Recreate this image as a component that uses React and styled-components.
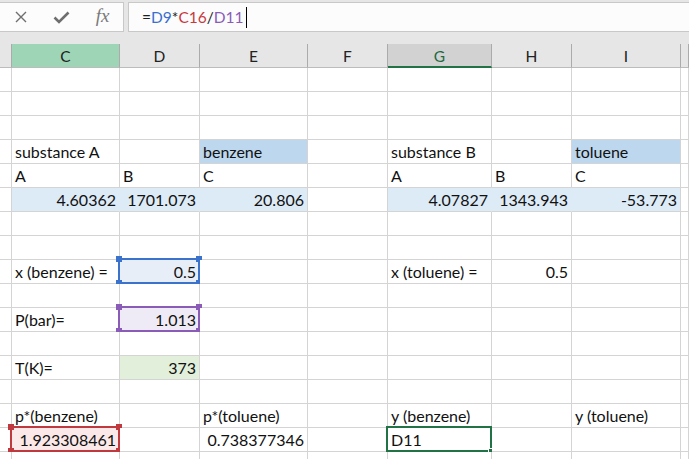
import React from "react";
import styled, { createGlobalStyle } from "styled-components";

const GlobalStyle = createGlobalStyle`
  html, body { margin: 0; padding: 0; background: #ffffff; overflow: hidden; }
  * { box-sizing: border-box; }
`;

const FONT = `"Lato", "Open Sans", "Liberation Sans", sans-serif`;

const Page = styled.div`
  width: 689px;
  height: 459px;
  display: flex;
  flex-direction: column;
  background: #ffffff;
  font-family: ${FONT};
  overflow: hidden;
`;

const FormulaBar = styled.div`
  height: 44px;
  flex: none;
  display: flex;
  align-items: flex-start;
  gap: 4px;
  padding-top: 2px;
  background: #e6e6e6;
`;

const IconBox = styled.div`
  width: 124px;
  height: 30px;
  display: flex;
  align-items: center;
  background: #fcfcfc;
  border-top: 1px solid #c8c8c8;
  border-bottom: 1px solid #c8c8c8;
  border-right: 1px solid #c8c8c8;
`;

const IconSlot = styled.div`
  width: 42px;
  height: 28px;
  display: flex;
  align-items: center;
  justify-content: center;
  color: #707070;
`;

const FxGlyph = styled.span`
  font-family: "Liberation Serif", serif;
  font-style: italic;
  font-size: 19px;
  color: #7a7a7a;
  letter-spacing: 0px;
  transform: translateY(-1px);
`;

const FormulaInput = styled.div`
  flex: 1;
  height: 30px;
  display: flex;
  align-items: center;
  padding-left: 13px;
  background: #fcfcfc;
  border: 1px solid #c8c8c8;
  border-right: none;
  font-size: 15.5px;
`;

const Token = styled.span`
  color: ${(p) => p.$color || "#1f1f1f"};
`;

const Caret = styled.span`
  display: inline-block;
  width: 1px;
  height: 21px;
  margin-left: 2px;
  background: #000;
`;

const Sheet = styled.div`
  display: grid;
  grid-template-columns: 12px 108px 80px 108px 80px 104px 80px 109px 1fr;
  grid-auto-rows: 24px;
`;

const ColHeader = styled.div`
  display: flex;
  align-items: center;
  justify-content: center;
  font-size: 15.5px;
  color: ${(p) => (p.$state === "active" ? "#1e6b42" : "#222")};
  background: ${(p) =>
    p.$state === "selected" ? "#9fd5b7" : p.$state === "active" ? "#d2d2d2" : "#e6e6e6"};
  border-right: 1px solid #ababab;
  border-bottom: ${(p) => (p.$state === "active" ? "2px solid #217346" : "1px solid #bcbcbc")};
  padding-top: 1px;
`;

const Cell = styled.div`
  position: relative;
  display: flex;
  align-items: flex-end;
  justify-content: ${(p) => (p.$right ? "flex-end" : "flex-start")};
  padding: 0 3px 2px 3px;
  font-size: 16px;
  line-height: 19px;
  color: #111;
  white-space: nowrap;
  background: ${(p) => p.$fill || "#ffffff"};
  border-right: 1px solid ${(p) => p.$fillRight || "#d4d4d4"};
  border-bottom: 1px solid #d4d4d4;
`;

const Range = styled.div`
  position: absolute;
  top: -2px;
  left: -2px;
  right: -1px;
  bottom: -1px;
  border: 2px solid ${(p) => p.$color};
  pointer-events: none;
`;

const Handle = styled.span`
  position: absolute;
  width: 6px;
  height: 6px;
  background: ${(p) => p.$color};
  ${(p) => (p.$v === "t" ? "top: -4px;" : "bottom: -4px;")}
  ${(p) => (p.$h === "l" ? "left: -4px;" : "right: -4px;")}
`;

const ActiveBorder = styled.div`
  position: absolute;
  top: -2px;
  left: -2px;
  right: -1px;
  bottom: -1px;
  border: 2px solid #217346;
  pointer-events: none;
`;

const FillHandle = styled.span`
  position: absolute;
  right: -4px;
  bottom: -4px;
  width: 6px;
  height: 6px;
  background: #217346;
  border: 1px solid #ffffff;
`;

const RangeBox = ({ color }) => (
  <Range $color={color}>
    <Handle $color={color} $v="t" $h="l" />
    <Handle $color={color} $v="t" $h="r" />
    <Handle $color={color} $v="b" $h="l" />
    <Handle $color={color} $v="b" $h="r" />
  </Range>
);

const HEAD = "#bdd7ee";
const VAL = "#ddebf7";

const rows = [
  {},
  {},
  {},
  {
    C: { t: "substance A" },
    E: { t: "benzene", fill: HEAD },
    G: { t: "substance B" },
    I: { t: "toluene", fill: HEAD },
  },
  { C: { t: "A" }, D: { t: "B" }, E: { t: "C" }, G: { t: "A" }, H: { t: "B" }, I: { t: "C" } },
  {
    C: { t: "4.60362", r: true, fill: VAL, joinRight: true },
    D: { t: "1701.073", r: true, fill: VAL, joinRight: true },
    E: { t: "20.806", r: true, fill: VAL },
    G: { t: "4.07827", r: true, fill: VAL, joinRight: true },
    H: { t: "1343.943", r: true, fill: VAL, joinRight: true },
    I: { t: "-53.773", r: true, fill: VAL },
  },
  {},
  {},
  {
    C: { t: "x (benzene) =" },
    D: { t: "0.5", r: true, fill: "#e8eef8", range: "#3a72cc" },
    G: { t: "x (toluene) =" },
    H: { t: "0.5", r: true },
  },
  {},
  { C: { t: "P(bar)=" }, D: { t: "1.013", r: true, fill: "#efebf6", range: "#8a5cb8" } },
  {},
  { C: { t: "T(K)=" }, D: { t: "373", r: true, fill: "#e2efda" } },
  {},
  {
    C: { t: "p*(benzene)" },
    E: { t: "p*(toluene)" },
    G: { t: "y (benzene)" },
    I: { t: "y (toluene)" },
  },
  {
    C: { t: "1.923308461", r: true, fill: "#fbe9ea", range: "#c0393e" },
    E: { t: "0.738377346", r: true },
    G: { t: "D11", active: true },
  },
  {},
];

const COLS = ["B", "C", "D", "E", "F", "G", "H", "I", "J"];

const CrossIcon = () => (
  <svg width="12" height="12" viewBox="0 0 12 12">
    <path d="M1 1 L11 11 M11 1 L1 11" stroke="#6e6e6e" strokeWidth="1.4" fill="none" />
  </svg>
);

const CheckIcon = () => (
  <svg width="17" height="13" viewBox="0 0 17 13">
    <path d="M1.5 6.5 L6 11 L15.5 1.5" stroke="#6e6e6e" strokeWidth="2.6" fill="none" strokeLinejoin="miter" />
  </svg>
);

export default function App() {
  return (
    <Page>
      <GlobalStyle />
      <FormulaBar>
        <IconBox>
          <IconSlot>
            <CrossIcon />
          </IconSlot>
          <IconSlot>
            <CheckIcon />
          </IconSlot>
          <IconSlot>
            <FxGlyph>fx</FxGlyph>
          </IconSlot>
        </IconBox>
        <FormulaInput>
          <Token>=</Token>
          <Token $color="#3a6fd1">D9</Token>
          <Token>*</Token>
          <Token $color="#c8393e">C16</Token>
          <Token>/</Token>
          <Token $color="#8a5cb8">D11</Token>
          <Caret />
        </FormulaInput>
      </FormulaBar>
      <Sheet>
        {COLS.map((c) => (
          <ColHeader
            key={c}
            $state={c === "C" ? "selected" : c === "G" ? "active" : undefined}
          >
            {c === "B" || c === "J" ? "" : c}
          </ColHeader>
        ))}
        {rows.map((row, ri) =>
          COLS.map((c) => {
            const d = row[c] || {};
            return (
              <Cell
                key={`${ri}-${c}`}
                $right={d.r}
                $fill={d.fill}
                $fillRight={d.joinRight ? d.fill : undefined}
              >
                {d.t}
                {d.range && <RangeBox color={d.range} />}
                {d.active && (
                  <ActiveBorder>
                    <FillHandle />
                  </ActiveBorder>
                )}
              </Cell>
            );
          })
        )}
      </Sheet>
    </Page>
  );
}
